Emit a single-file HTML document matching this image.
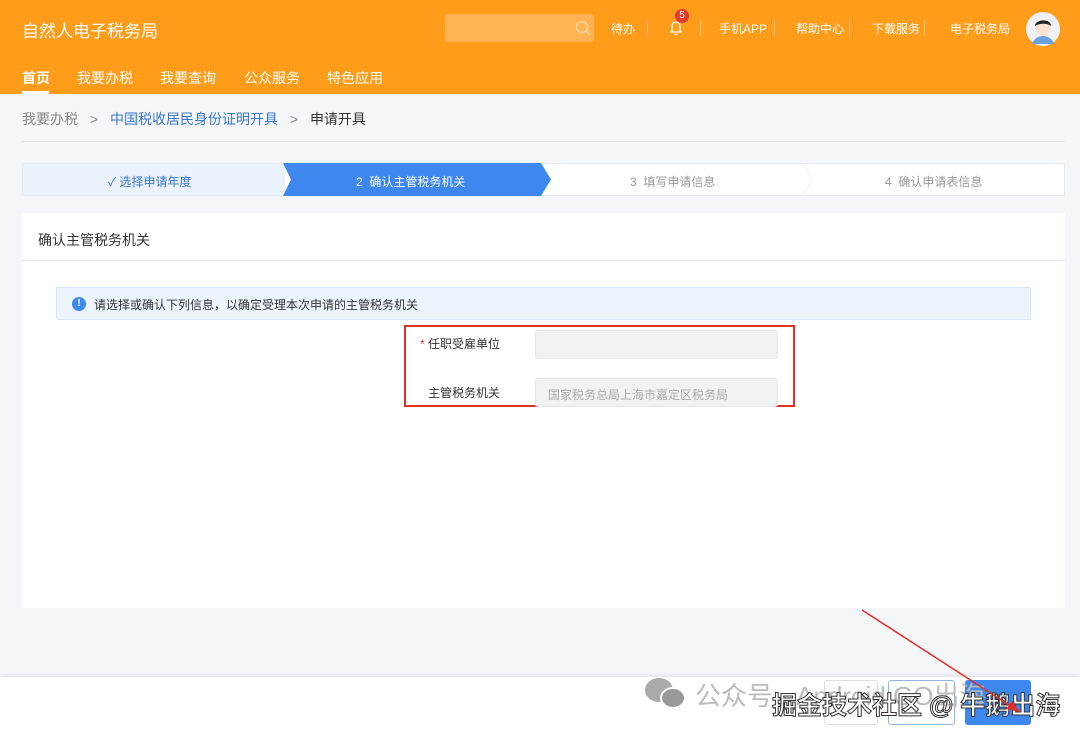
<!DOCTYPE html>
<html><head><meta charset="utf-8"><style>
*{margin:0;padding:0;box-sizing:border-box}
body{width:1080px;height:737px;overflow:hidden;background:#f4f6f9;font-family:"Liberation Sans","Noto Sans CJK SC",sans-serif;position:relative;color:#333}
.a{position:absolute}
.hdr{left:0;top:0;width:1080px;height:94px;background:#ff9c1a}
.t{white-space:nowrap}
</style></head><body>
<div class="a hdr"></div>
<div class="a t" style="left:22px;top:17px;font-size:17px;color:#fff">自然人电子税务局</div>
<div class="a" style="left:445px;top:14px;width:149px;height:28px;background:#ffb352;border-radius:3px"></div>
<svg class="a" style="left:575px;top:20px" width="16" height="16"><circle cx="7" cy="7" r="5.5" fill="none" stroke="#ffd9a6" stroke-width="1.3"/><path d="M11 11l4 4" stroke="#ffd9a6" stroke-width="1.3"/></svg>
<div class="a t" style="left:611px;top:20px;font-size:12px;color:#fff">待办</div>
<div class="a" style="left:647px;top:20px;width:1px;height:16px;background:#ffc27a"></div>
<svg class="a" style="left:665px;top:16px" width="22" height="22"><path d="M5 16h12M7 16V10a4 4 0 0 1 8 0v6M9.5 18.5h3" stroke="#fff" stroke-width="1.3" fill="none"/></svg>
<div class="a" style="left:675px;top:9px;width:14px;height:14px;border-radius:7px;background:#e53b2e;color:#fff;font-size:10px;text-align:center;line-height:14px">5</div>
<div class="a" style="left:700px;top:20px;width:1px;height:16px;background:#ffc27a"></div>
<div class="a t" style="left:719px;top:20px;font-size:12px;color:#fff">手机APP</div>
<div class="a" style="left:774px;top:20px;width:1px;height:16px;background:#ffc27a"></div>
<div class="a t" style="left:796px;top:20px;font-size:12px;color:#fff">帮助中心</div>
<div class="a" style="left:849px;top:20px;width:1px;height:16px;background:#ffc27a"></div>
<div class="a t" style="left:872px;top:20px;font-size:12px;color:#fff">下载服务</div>
<div class="a" style="left:924px;top:20px;width:1px;height:16px;background:#ffc27a"></div>
<div class="a t" style="left:950px;top:20px;font-size:12px;color:#fff">电子税务局</div>
<svg class="a" style="left:1025px;top:11px" width="36" height="36"><circle cx="18" cy="18" r="17" fill="#eef2f7"/><path d="M7 33c2-6 7-8 11-8s9 2 11 8" fill="#6aa2e0"/><ellipse cx="18" cy="17" rx="7" ry="8" fill="#fbe3d1"/><path d="M10 15c0-7 16-8 16 0-3-3-12-3-16 0z" fill="#222"/></svg>
<div class="a t" style="left:22px;top:68px;font-size:14px;color:#fff;font-weight:bold">首页</div>
<div class="a" style="left:22px;top:91px;width:27px;height:3px;background:#fff"></div>
<div class="a t" style="left:77px;top:68px;font-size:14px;color:#fff">我要办税</div>
<div class="a t" style="left:160px;top:68px;font-size:14px;color:#fff">我要查询</div>
<div class="a t" style="left:244px;top:68px;font-size:14px;color:#fff">公众服务</div>
<div class="a t" style="left:327px;top:68px;font-size:14px;color:#fff">特色应用</div>

<div class="a t" style="left:22px;top:109px;font-size:14px;color:#888">我要办税 <span style="margin:0 8px">&gt;</span> <span style="color:#3a78c9">中国税收居民身份证明开具</span> <span style="margin:0 8px">&gt;</span> <span style="color:#333">申请开具</span></div>
<div class="a" style="left:22px;top:141px;width:1043px;height:1px;background:#e3e7ec"></div>

<div class="a" style="left:22px;top:163px;width:1043px;height:33px;background:#fff;border:1px solid #e6ebf0"></div>
<div class="a" style="left:23px;top:164px;width:262px;height:31px;background:#eaf3fc"></div>
<svg class="a" style="left:283px;top:163px" width="272" height="33"><path d="M0 0H258L268 16.5 258 33H0L8 16.5Z" fill="#3e87ef"/></svg>
<svg class="a" style="left:800px;top:163px" width="14" height="33"><path d="M2 0L12 16.5 2 33" stroke="#eef1f4" fill="none"/></svg>
<div class="a t" style="left:108px;top:173px;font-size:12px;color:#3a78c9">✓ 选择申请年度</div>
<div class="a t" style="left:356px;top:173px;font-size:12px;color:#fff">2&nbsp;&nbsp;确认主管税务机关</div>
<div class="a t" style="left:630px;top:173px;font-size:12px;color:#999">3&nbsp;&nbsp;填写申请信息</div>
<div class="a t" style="left:885px;top:173px;font-size:12px;color:#999">4&nbsp;&nbsp;确认申请表信息</div>

<div class="a" style="left:22px;top:213px;width:1043px;height:395px;background:#fff"></div>
<div class="a t" style="left:38px;top:230px;font-size:14px;color:#333">确认主管税务机关</div>
<div class="a" style="left:22px;top:260px;width:1043px;height:1px;background:#e6e9ee"></div>
<div class="a" style="left:56px;top:287px;width:975px;height:33px;background:#ecf4fc;border:1px solid #d9e7f6;border-radius:2px"></div>
<div class="a" style="left:72px;top:297px;width:14px;height:14px;border-radius:7px;background:#3e87ef;color:#fff;font-size:10px;text-align:center;line-height:14px;font-weight:bold">!</div>
<div class="a t" style="left:94px;top:296px;font-size:12px;color:#333">请选择或确认下列信息，以确定受理本次申请的主管税务机关</div>
<div class="a" style="left:404px;top:325px;width:391px;height:82px;border:2px solid #e0302a"></div>
<div class="a t" style="left:420px;top:335px;font-size:12px;color:#333"><span style="color:#e0302a">*</span> 任职受雇单位</div>
<div class="a" style="left:535px;top:330px;width:243px;height:29px;background:#f1f2f4;border:1px solid #e4e6ea;border-radius:3px"></div>
<div class="a t" style="left:428px;top:384px;font-size:12px;color:#333">主管税务机关</div>
<div class="a" style="left:535px;top:378px;width:243px;height:29px;background:#f1f2f4;border:1px solid #e4e6ea;border-radius:3px"></div>
<div class="a t" style="left:548px;top:386px;font-size:12px;color:#aaa">国家税务总局上海市嘉定区税务局</div>

<div class="a" style="left:0;top:677px;width:1080px;height:60px;background:#fff;box-shadow:0 -2px 4px rgba(0,0,0,.08)"></div>
<div class="a" style="left:824px;top:680px;width:54px;height:45px;border:1px solid #dcdfe4;border-radius:3px;background:#fff"></div>
<div class="a" style="left:888px;top:680px;width:67px;height:45px;border:1px solid #8fb5e6;border-radius:3px;background:#fff"></div>
<div class="a" style="left:965px;top:680px;width:66px;height:45px;background:#3e87ef;border-radius:3px"></div>
<svg class="a" style="left:643px;top:676px" width="44" height="34"><ellipse cx="16" cy="14" rx="14" ry="12" fill="#aaa"/><ellipse cx="30" cy="22" rx="12" ry="10" fill="#999" stroke="#fff" stroke-width="2"/></svg>
<div class="a t" style="left:695px;top:676px;font-size:26px;color:#bbb">公众号 · Android GO出海</div>
<div class="a t" style="left:772px;top:686px;font-size:25px;color:#fff;-webkit-text-stroke:1px #333;font-weight:bold">掘金技术社区 @ 牛鹅出海</div>
<svg class="a" style="left:850px;top:600px" width="180" height="120"><path d="M12 10L170 112" stroke="#e0302a" stroke-width="1.5"/><path d="M170 112l-14-3 6-8z" fill="#e0302a"/></svg>
</body></html>
